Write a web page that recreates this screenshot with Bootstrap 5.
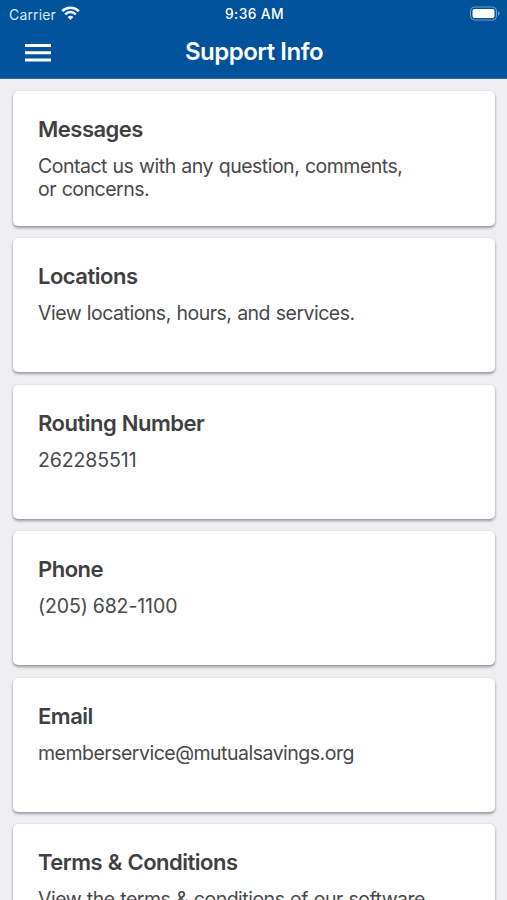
<!DOCTYPE html>
<html lang="en">
<head>
<meta charset="utf-8">
<meta name="viewport" content="width=device-width, initial-scale=1">
<title>Support Info</title>
<link href="https://cdn.jsdelivr.net/npm/bootstrap@5.3.0/dist/css/bootstrap.min.css" rel="stylesheet">
<style>
  body { font-family: Inter, "Liberation Sans", sans-serif; background: #eeeef3; color: #404042; height: 900px; overflow: hidden; }
  .app-header { background: #00529b; height: 79px; border-bottom: 1px solid #2a6cab; }
  .status-bar { height: 27px; font-size: 14px; line-height: 27px; padding: 0 7px 0 9px; }
  .status-side { flex: 1 1 0; }
  .carrier { color: #dcebf9; letter-spacing: .15px; padding-top: 1px; }
  .wifi { margin-left: 5px; }
  .clock { font-size: 13.8px; letter-spacing: .4px; padding-top: 1px; }
  .title-bar { height: 51px; padding: 0 25px; }
  .title-bar h1 { font-size: 24px; line-height: 49px; padding: 0 1px 3px 0; letter-spacing: -.5px; }
  .menu-btn { width: 26px; height: 50px; }
  .info-list { padding: 12.4px 12.5px 0 13px; gap: 12.3px; }
  .info-card { height: 134.3px; padding: 25px; flex-shrink: 0; border-radius: 5px; color: inherit; box-shadow: 0 2px 3px rgba(0,0,0,.35), 0 0 2px rgba(0,0,0,.12); }
  .info-card h2 { font-size: 22px; line-height: 26px; margin-bottom: 13px; letter-spacing: -.5px; word-spacing: .6px; }
  .info-card p { font-size: 19.5px; line-height: 23px; color: #48484a; letter-spacing: -.5px; word-spacing: .7px; }
  .info-card .digits { letter-spacing: -.1px; word-spacing: -.5px; }
</style>
</head>
<body>
<header class="app-header text-white">
  <div class="status-bar d-flex align-items-center">
    <div class="status-side d-flex align-items-center">
      <span class="carrier">Carrier</span>
      <svg class="wifi" width="19" height="15" viewBox="0 0 19 15" fill="none" stroke="#fff" stroke-width="2.5" aria-hidden="true">
        <path d="M1.2 5.1a11.8 11.8 0 0 1 16.6 0"/>
        <path d="M4.2 8.3a7.5 7.5 0 0 1 10.6 0"/>
        <path d="M9.5 14 6.6 11.1a4.1 4.1 0 0 1 5.8 0z" fill="#fff" stroke="none"/>
      </svg>
    </div>
    <span class="clock fw-medium">9:36 AM</span>
    <div class="status-side d-flex justify-content-end">
      <svg width="31" height="15" viewBox="0 0 31 15" aria-hidden="true">
        <rect x="1.5" y="1" width="26" height="13" rx="4" fill="none" stroke="#6c9fce"/>
        <rect x="3.5" y="3" width="22" height="9" rx="2" fill="#fff"/>
        <path d="M29 5.3v4.4q1.7-.7 1.7-2.2T29 5.3z" fill="#6c9fce"/>
      </svg>
    </div>
  </div>
  <div class="title-bar d-flex align-items-center">
    <button class="menu-btn btn p-0 border-0 d-flex align-items-center" type="button" aria-label="Menu">
      <svg width="26" height="18" viewBox="0 0 26 18" fill="#fff"><path d="M0 0h26v3H0zM0 7.2h26v3H0zM0 14.4h26v3H0z"/></svg>
    </button>
    <h1 class="flex-grow-1 text-center fw-semibold mb-0 me-4">Support Info</h1>
  </div>
</header>
<main class="info-list d-flex flex-column">
  <section class="info-card card border-0"><h2 class="fw-semibold">Messages</h2><p class="mb-0">Contact us with any question, comments,<br>or concerns.</p></section>
  <section class="info-card card border-0"><h2 class="fw-semibold">Locations</h2><p class="mb-0">View locations, hours, and services.</p></section>
  <section class="info-card card border-0"><h2 class="fw-semibold">Routing Number</h2><p class="digits mb-0">262285511</p></section>
  <section class="info-card card border-0"><h2 class="fw-semibold">Phone</h2><p class="digits mb-0">(205) 682-1100</p></section>
  <section class="info-card card border-0"><h2 class="fw-semibold">Email</h2><p class="mb-0">memberservice@mutualsavings.org</p></section>
  <section class="info-card card border-0"><h2 class="fw-semibold">Terms &amp; Conditions</h2><p class="mb-0">View the terms &amp; conditions of our software</p></section>
</main>
<script src="https://cdn.jsdelivr.net/npm/bootstrap@5.3.0/dist/js/bootstrap.bundle.min.js"></script>
</body>
</html>
